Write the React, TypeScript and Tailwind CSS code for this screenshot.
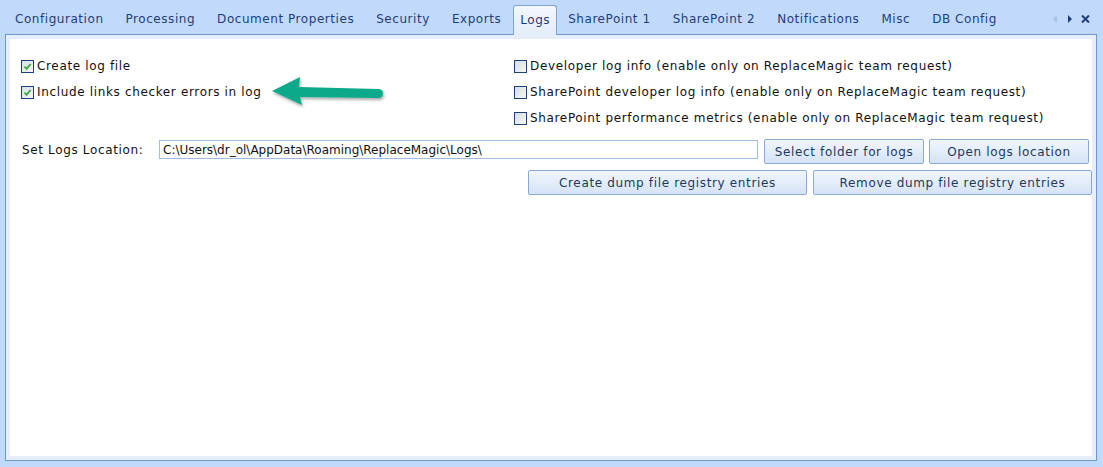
const tabs = [
  "Configuration",
  "Processing",
  "Document Properties",
  "Security",
  "Exports",
  "Logs",
  "SharePoint 1",
  "SharePoint 2",
  "Notifications",
  "Misc",
  "DB Config",
];

function Check({ checked }: { checked?: boolean }) {
  return (
    <span className="flex size-[13px] shrink-0 items-center justify-center border border-[#1d4274] bg-gradient-to-br from-[#d7dee8] to-[#f4f6f9]">
      {checked && (
        <svg width="9" height="9" viewBox="0 0 9 9">
          <path d="M1.5 4.5 L3.6 6.8 L7.6 2" fill="none" stroke="#3aa83a" strokeWidth="1.8" />
        </svg>
      )}
    </span>
  );
}

function Option({ label, checked }: { label: string; checked?: boolean }) {
  return (
    <label className="flex h-[26px] items-center gap-[3px]">
      <Check checked={checked} />
      <span>{label}</span>
    </label>
  );
}

function Btn({ children, className }: { children: string; className: string }) {
  return (
    <button
      className={`flex h-[25px] items-center justify-center rounded-[2px] border border-[#8aa9d4] bg-gradient-to-b from-[#f1f6fd] to-[#d5e3f6] text-[#1e395b] ${className}`}
    >
      {children}
    </button>
  );
}

export default function App() {
  return (
    <div className="flex h-[467px] w-[1103px] flex-col bg-[#c1dafb] font-['DejaVu_Sans',sans-serif] text-[12px] tracking-[0.65px] text-[#111]">
      <div className="flex h-[34px] items-end pl-[4px] tracking-[0.55px]">
        {tabs.map((t) =>
          t === "Logs" ? (
            <div
              key={t}
              className="relative z-10 -mb-px ml-[1px] flex h-[30px] items-center rounded-t-[3px] border border-b-0 border-[#7fa4d6] bg-gradient-to-b from-[#f3f7fd] to-[#e3ecf8] px-[6px] pb-[1px] text-[#1f3d7b]"
            >
              {t}
            </div>
          ) : (
            <div key={t} className="flex h-[30px] items-center px-[11px] text-[#1f3d7b]">
              {t}
            </div>
          )
        )}
        <div className="ml-auto flex h-[30px] items-center gap-[9px] pr-[13px] text-[#1f3d7b]">
          <svg width="5" height="8" viewBox="0 0 5 8">
            <path d="M4 0 L0 4 L4 8 Z" fill="#a9c3e6" />
          </svg>
          <svg width="5" height="8" viewBox="0 0 5 8">
            <path d="M1 0 L5 4 L1 8 Z" fill="#1f3d7b" />
          </svg>
          <svg width="9" height="8" viewBox="0 0 9 8">
            <path d="M1 0.5 L8 7.5 M8 0.5 L1 7.5" stroke="#1f3d7b" strokeWidth="2" />
          </svg>
        </div>
      </div>
      <div className="mx-[5px] mb-[6px] mr-[6px] flex flex-1 border border-[#6f97cf] bg-[#e6eefa] p-[4px]">
        <div className="flex-1 bg-white pl-[11px] pt-[14px]">
          <div className="flex">
            <div className="relative w-[493px]">
              <Option label="Create log file" checked />
              <Option label="Include links checker errors in log" checked />
              <svg
                className="absolute left-[237px] top-[17px]"
                width="132"
                height="42"
                viewBox="0 0 132 42"
              >
                <defs>
                  <filter id="sh" x="-10%" y="-30%" width="130%" height="160%">
                    <feDropShadow dx="1" dy="2" stdDeviation="1.5" floodColor="#000" floodOpacity="0.35" />
                  </filter>
                </defs>
                <path
                  d="M14 21 L42 7 L41 17 L120 19 Q125 19 125 23.5 Q125 28 120 28 L42 27 L44 35 Z"
                  fill="#10a98b"
                  filter="url(#sh)"
                />
              </svg>
            </div>
            <div>
              <Option label="Developer log info (enable only on ReplaceMagic team request)" />
              <Option label="SharePoint developer log info (enable only on ReplaceMagic team request)" />
              <Option label="SharePoint performance metrics (enable only on ReplaceMagic team request)" />
            </div>
          </div>
          <div className="mt-[8px] flex items-start">
            <span className="ml-[1px] flex h-[21px] w-[137px] items-center">Set Logs Location:</span>
            <div className="mt-[1px] flex h-[19px] w-[599px] items-center border border-[#9fbde3] px-[3px] tracking-normal">
              C:\Users\dr_ol\AppData\Roaming\ReplaceMagic\Logs\
            </div>
            <Btn className="ml-[6px] w-[160px]">Select folder for logs</Btn>
            <Btn className="ml-[5px] w-[160px]">Open logs location</Btn>
          </div>
          <div className="mt-[6px] flex">
            <Btn className="ml-[507px] w-[279px]">Create dump file registry entries</Btn>
            <Btn className="ml-[6px] w-[279px]">Remove dump file registry entries</Btn>
          </div>
        </div>
      </div>
    </div>
  );
}
